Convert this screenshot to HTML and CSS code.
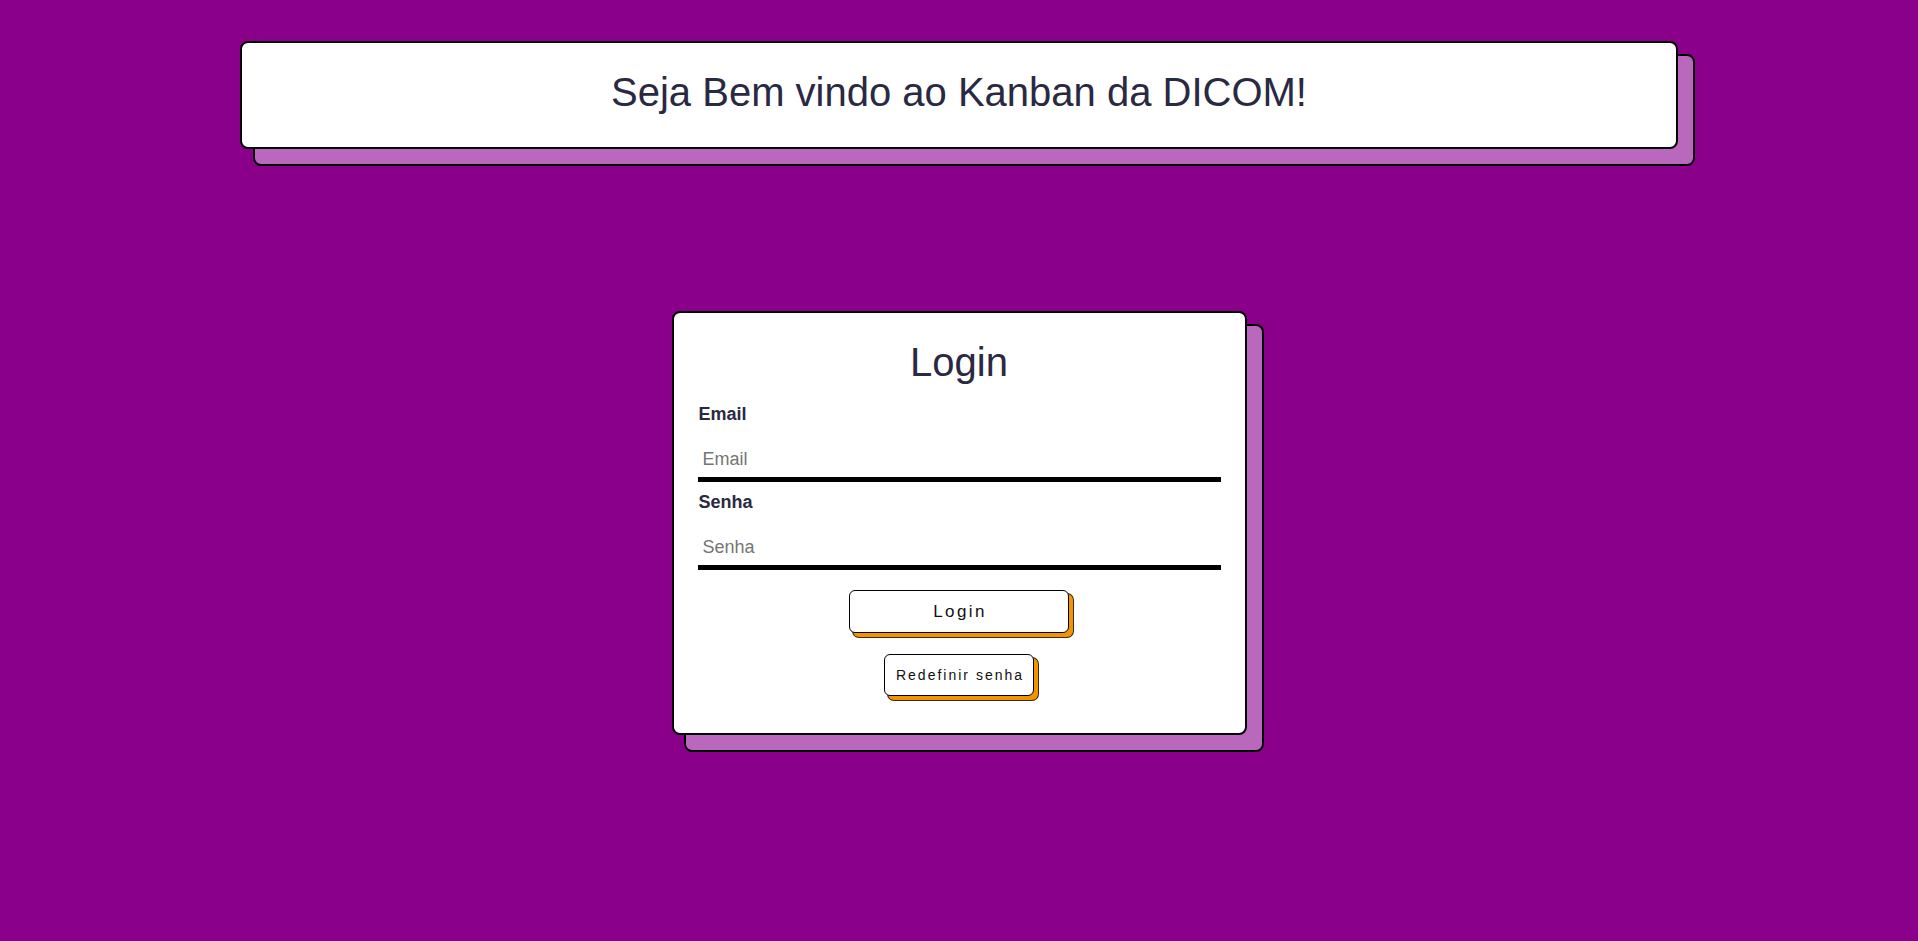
FILE: index.html
```html
<!DOCTYPE html>
<html lang="pt-BR">
<head>
<meta charset="utf-8">
<title>Kanban DICOM</title>
<link rel="stylesheet" href="styles.css">
</head>
<body>
  <header class="banner">
    <h1 class="banner-title">Seja Bem vindo ao Kanban da DICOM!</h1>
  </header>
  <main class="card">
    <h2 class="card-title">Login</h2>
    <form class="form">
      <label class="field-label first" for="email">Email</label>
      <input class="field-input" id="email" type="email" placeholder="Email">
      <label class="field-label" for="senha">Senha</label>
      <input class="field-input" id="senha" type="password" placeholder="Senha">
      <button class="btn btn-login" type="button">Login</button>
      <button class="btn btn-reset" type="button">Redefinir senha</button>
    </form>
  </main>
</body>
</html>
```
FILE: styles.css
```css
* { box-sizing: border-box; }

html, body {
  margin: 0;
  padding: 0;
}

body {
  background: #8b008b;
  font-family: "Liberation Sans", Arial, sans-serif;
  color: #2a2942;
  min-height: 941px;
  overflow: hidden;
}

.banner {
  position: relative;
  width: 75%;
  height: 108px;
  margin: 41px auto 0;
  background: #fff;
  border: 2px solid #000;
  border-radius: 8px;
  display: flex;
  align-items: center;
  justify-content: center;
  padding-bottom: 6px;
}

.banner::before,
.card::before {
  content: "";
  position: absolute;
  top: 11px;
  left: 11px;
  right: -19px;
  bottom: -19px;
  background: #ba68bd;
  border: 2px solid #000;
  border-radius: 8px;
  z-index: -1;
}

.banner-title {
  margin: 0;
  font-size: 40px;
  font-weight: normal;
  line-height: 46px;
}

.card {
  position: relative;
  width: 575px;
  margin: 162px auto 0;
  background: #fff;
  border: 2px solid #000;
  border-radius: 8px;
  padding: 26px 24px 37px;
}

.card::before {
  left: 10px;
}

.card-title {
  margin: 0;
  text-align: center;
  font-size: 40px;
  font-weight: normal;
  line-height: 46px;
}

.form {
  display: flex;
  flex-direction: column;
}

.field-label {
  display: block;
  font-size: 18px;
  font-weight: bold;
  line-height: 21px;
  margin-top: 10px;
  padding-left: 1px;
}

.field-label.first {
  margin-top: 19px;
}

.field-input {
  display: block;
  width: 100%;
  height: 40px;
  margin-top: 17px;
  padding: 0 5px;
  border: none;
  border-bottom: 5px solid #000;
  outline: none;
  font-family: "Liberation Sans", Arial, sans-serif;
  font-size: 18px;
  color: #2a2942;
  background: #fff;
}

.field-input::placeholder {
  color: #757575;
}

.btn {
  align-self: center;
  background: #fff;
  color: #111;
  border: 1px solid #000;
  border-radius: 6px;
  font-family: "Liberation Sans", Arial, sans-serif;
  box-shadow: 4px 4px 0 0 #f29400, 4px 4px 0 1px #3a2a10;
  cursor: pointer;
  padding: 0;
}

.btn-login {
  width: 220px;
  height: 43px;
  margin-top: 20px;
  font-size: 17px;
  letter-spacing: 2.4px;
  text-indent: 2px;
}

.btn-reset {
  height: 42px;
  margin-top: 21px;
  padding: 0 9px 0 11px;
  font-size: 14px;
  letter-spacing: 2px;
}
```
